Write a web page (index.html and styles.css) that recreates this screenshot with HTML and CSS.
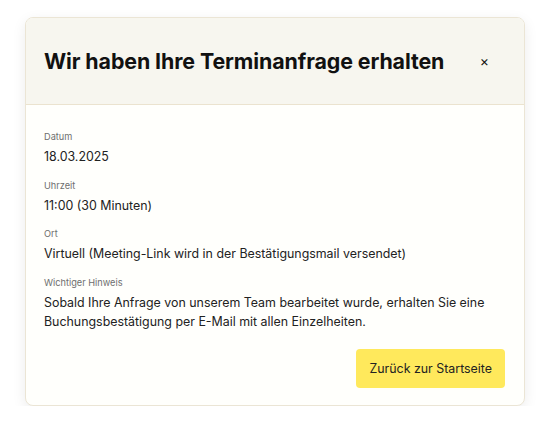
FILE: index.html
```html
<!DOCTYPE html>
<html lang="de">
<head>
<meta charset="utf-8">
<title>Terminanfrage</title>
<link rel="stylesheet" href="styles.css">
</head>
<body>
<div class="card">
  <div class="card-header">
    <h1 class="title">Wir haben Ihre Terminanfrage erhalten</h1>
    <button class="close" aria-label="Schließen">×</button>
  </div>
  <div class="card-body">
    <div class="field">
      <div class="label">Datum</div>
      <div class="value">18.03.2025</div>
    </div>
    <div class="field">
      <div class="label">Uhrzeit</div>
      <div class="value">11:00 (30 Minuten)</div>
    </div>
    <div class="field">
      <div class="label">Ort</div>
      <div class="value">Virtuell (Meeting-Link wird in der Bestätigungsmail versendet)</div>
    </div>
    <div class="field">
      <div class="label">Wichtiger Hinweis</div>
      <div class="value">Sobald Ihre Anfrage von unserem Team bearbeitet wurde, erhalten Sie eine Buchungsbestätigung per E-Mail mit allen Einzelheiten.</div>
    </div>
    <div class="actions">
      <button class="primary">Zurück zur Startseite</button>
    </div>
  </div>
</div>
</body>
</html>
```
FILE: styles.css
```css
* { box-sizing: border-box; }
html, body { margin: 0; padding: 0; background: #ffffff; }
body {
  font-family: Inter, "Noto Sans", sans-serif;
  color: #222222;
  padding-top: 17px;
}
.card {
  width: 500px;
  margin: 0 auto;
  border: 1px solid #ebe5d5;
  border-radius: 8px;
  background: #fffffc;
  box-shadow: 0 4px 14px rgba(0, 0, 0, 0.08);
  overflow: hidden;
}
.card-header {
  height: 87px;
  background: #f7f6ef;
  border-bottom: 1px solid #ebe3cf;
  display: flex;
  align-items: center;
  justify-content: space-between;
  padding: 0 35px 0 18px;
}
.title {
  margin: 0;
  font-size: 21.4px;
  font-weight: 700;
  line-height: 28px;
  color: #111111;
  letter-spacing: -0.1px;
}
.close {
  border: none;
  background: transparent;
  font-family: Inter, sans-serif;
  font-size: 14px;
  line-height: 18px;
  padding: 0;
  color: #111111;
  cursor: pointer;
}
.card-body {
  padding: 25px 19px 17px 18px;
  display: flex;
  flex-direction: column;
  gap: 12px;
}
.field { display: flex; flex-direction: column; gap: 3px; }
.label {
  font-size: 9.2px;
  line-height: 14px;
  color: #6e6e6e;
}
.value {
  font-size: 12.4px;
  line-height: 19.5px;
  color: #222222;
}
.actions {
  display: flex;
  justify-content: flex-end;
  margin-top: 5px;
}
.primary {
  font-family: Inter, sans-serif;
  font-size: 12.4px;
  line-height: 19px;
  padding: 10px 13px;
  background: #ffe95c;
  color: #222222;
  border: none;
  border-radius: 4px;
  cursor: pointer;
}
```
